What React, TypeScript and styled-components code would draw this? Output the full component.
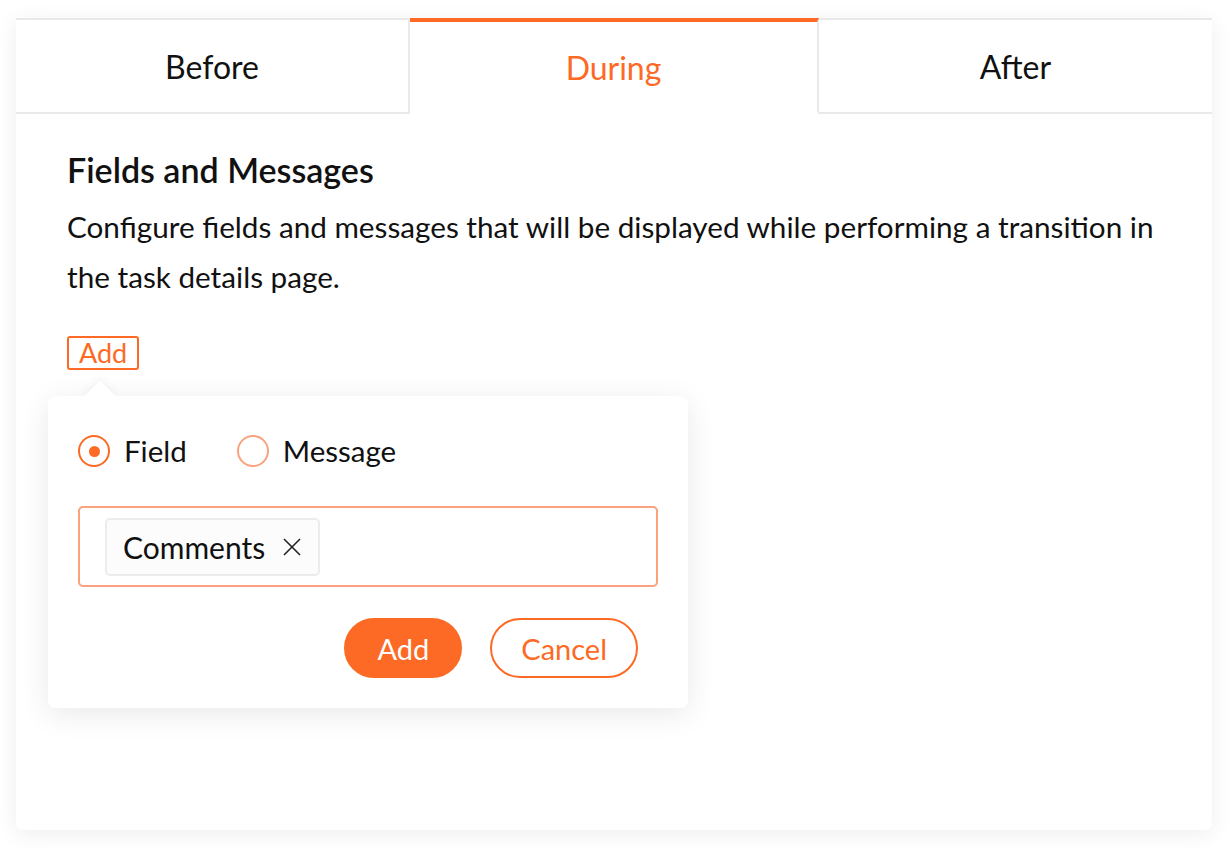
import React, { useState } from "react";
import styled, { createGlobalStyle } from "styled-components";

const orange = "#fc6a25";
const softOrange = "#f9a27d";

const GlobalStyle = createGlobalStyle`
  html, body {
    margin: 0;
    background: #ffffff;
    font-family: "Lato", "Open Sans", sans-serif;
    color: #111111;
  }
  * {
    box-sizing: border-box;
  }
`;

const Page = styled.div`
  padding: 18px 18px 18px 16px;
`;

const Card = styled.div`
  position: relative;
  height: 812px;
  background: #ffffff;
  border-radius: 0 0 6px 6px;
  box-shadow: 0 4px 22px rgba(0, 0, 0, 0.07);
`;

const Tabs = styled.div`
  display: grid;
  grid-template-columns: 394px 409px 1fr;
`;

const Tab = styled.button<{ $active?: boolean }>`
  height: 96px;
  padding: 0;
  background: #ffffff;
  font-family: inherit;
  font-size: 32px;
  color: ${(p) => (p.$active ? orange : "#111111")};
  border: 0;
  border-top: ${(p) => (p.$active ? `4px solid ${orange}` : "2px solid #e9e9e9")};
  border-bottom: 2px solid ${(p) => (p.$active ? "transparent" : "#e9e9e9")};
  border-right: 2px solid #e9e9e9;
  cursor: pointer;
  &:last-child {
    border-right: 0;
  }
`;

const Body = styled.div`
  padding: 34px 51px 0 51px;
`;

const Heading = styled.h2`
  margin: 0;
  font-size: 34px;
  line-height: 44px;
  font-weight: 600;
`;

const Description = styled.p`
  margin: 10px 0 0;
  font-size: 29.7px;
  line-height: 50px;
`;

const AddLink = styled.button`
  display: block;
  margin-top: 34px;
  height: 34px;
  padding: 0 10px;
  font-family: inherit;
  font-size: 27px;
  line-height: 30px;
  color: ${orange};
  background: #ffffff;
  border: 2px solid ${orange};
  border-radius: 3px;
  cursor: pointer;
`;

const Popover = styled.div`
  position: absolute;
  left: 32px;
  top: 378px;
  width: 640px;
  background: #ffffff;
  border-radius: 7px;
  box-shadow: 0 6px 30px rgba(0, 0, 0, 0.09);
  padding: 39px 30px 30px 30px;
  &::before {
    content: "";
    position: absolute;
    left: 41px;
    top: -11px;
    width: 22px;
    height: 22px;
    background: #ffffff;
    transform: rotate(45deg);
    box-shadow: -3px -3px 8px rgba(0, 0, 0, 0.04);
  }
`;

const RadioRow = styled.div`
  display: flex;
  align-items: center;
  gap: 50px;
`;

const RadioOption = styled.label`
  display: flex;
  align-items: center;
  gap: 14px;
  font-size: 29.5px;
  line-height: 32px;
  cursor: pointer;
`;

const RadioCircle = styled.span<{ $checked?: boolean }>`
  display: flex;
  align-items: center;
  justify-content: center;
  width: 32px;
  height: 32px;
  border-radius: 50%;
  border: 2px solid ${(p) => (p.$checked ? orange : softOrange)};
  &::after {
    content: "";
    width: 11px;
    height: 11px;
    border-radius: 50%;
    background: ${orange};
    display: ${(p) => (p.$checked ? "block" : "none")};
  }
`;

const TagInput = styled.div`
  display: flex;
  align-items: center;
  margin-top: 39px;
  height: 81px;
  padding: 0 25px;
  border: 2px solid ${softOrange};
  border-radius: 5px;
`;

const Chip = styled.span`
  display: flex;
  align-items: center;
  gap: 18px;
  height: 58px;
  padding: 0 17px 0 16px;
  border: 2px solid #ececec;
  border-radius: 5px;
  background: #fcfcfc;
  font-size: 30px;
`;

const ChipClose = styled.span`
  display: flex;
  width: 18px;
  height: 18px;
  cursor: pointer;
`;

const Actions = styled.div`
  display: flex;
  justify-content: flex-end;
  gap: 28px;
  margin-top: 31px;
  padding-right: 20px;
`;

const PillButton = styled.button<{ $primary?: boolean }>`
  height: 60px;
  padding: 0 ${(p) => (p.$primary ? 31 : 29)}px;
  border-radius: 30px;
  font-family: inherit;
  font-size: 29px;
  color: ${(p) => (p.$primary ? "#ffffff" : orange)};
  background: ${(p) => (p.$primary ? orange : "#ffffff")};
  border: 2px solid ${orange};
  cursor: pointer;
`;

export default function App() {
  const [tab, setTab] = useState("During");
  const [kind, setKind] = useState("Field");

  return (
    <>
      <GlobalStyle />
      <Page>
        <Card>
          <Tabs>
            {["Before", "During", "After"].map((t) => (
              <Tab key={t} $active={tab === t} onClick={() => setTab(t)}>
                {t}
              </Tab>
            ))}
          </Tabs>
          <Body>
            <Heading>Fields and Messages</Heading>
            <Description>
              Configure fields and messages that will be displayed while
              performing a transition in the task details page.
            </Description>
            <AddLink>Add</AddLink>
          </Body>
          <Popover>
            <RadioRow>
              {["Field", "Message"].map((k) => (
                <RadioOption key={k} onClick={() => setKind(k)}>
                  <RadioCircle $checked={kind === k} />
                  {k}
                </RadioOption>
              ))}
            </RadioRow>
            <TagInput>
              <Chip>
                Comments
                <ChipClose>
                  <svg width="18" height="18" viewBox="0 0 18 18">
                    <path
                      d="M1 1 L17 17 M17 1 L1 17"
                      stroke="#222"
                      strokeWidth="1.6"
                      fill="none"
                    />
                  </svg>
                </ChipClose>
              </Chip>
            </TagInput>
            <Actions>
              <PillButton $primary>Add</PillButton>
              <PillButton>Cancel</PillButton>
            </Actions>
          </Popover>
        </Card>
      </Page>
    </>
  );
}
